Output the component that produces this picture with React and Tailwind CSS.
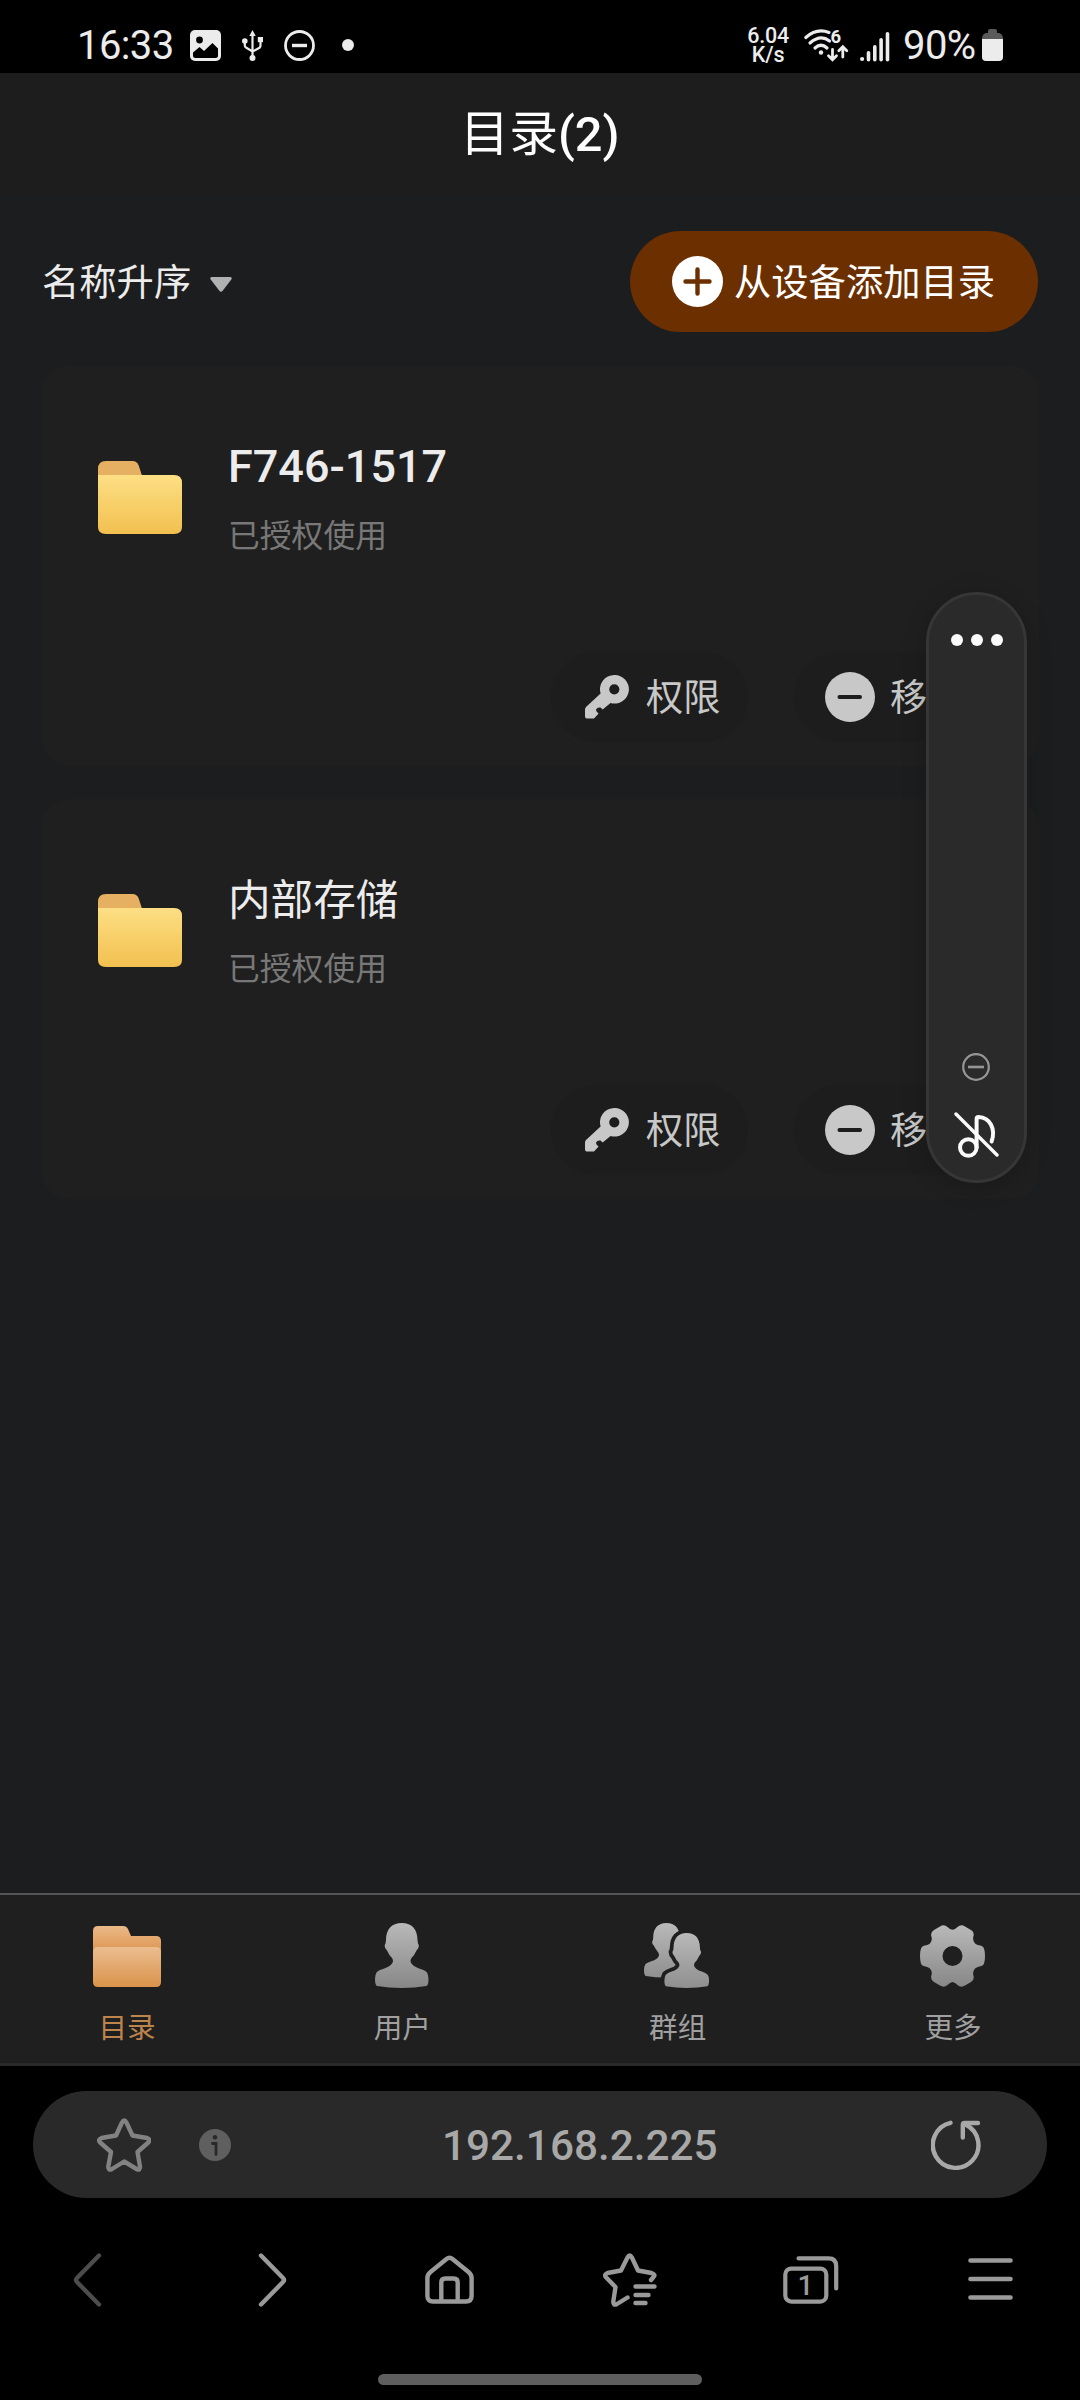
import React from 'react';

const directories = [
  { name: 'F746-1517', status: '已授权使用', latin: true },
  { name: '内部存储', status: '已授权使用', latin: false },
];

function StatusBar() {
  return (
    <div className="flex h-[73px] w-full shrink-0 items-start bg-black pl-[77px] pr-[77px] text-[#ececec]">
      <span className="mt-[22px] w-[98px] text-[40px] leading-[47px] tracking-[-0.6px]">16:33</span>

      {/* Picture */}
      <svg className="ml-[15px] mt-[30px]" width="31" height="31" viewBox="0 0 31 31">
        <rect width="31" height="31" rx="5" fill="#ececec" />
        <circle cx="9.5" cy="10" r="3.4" fill="#000" />
        <path d="M3 22.5L9.5 17L14 21L22.5 13L28 18.5V25.5Q28 28 25.5 28H5.5Q3 28 3 25.5Z" fill="#000" />
      </svg>

      {/* USB */}
      <svg className="ml-[21px] mt-[30px]" width="21" height="31" viewBox="0 0 21 31" fill="#ececec">
        <path d="M10.5 4V28M2.8 11V15.5Q2.8 17 4 17.5L10.5 21.5L17.5 17.8Q18.5 17 18.5 15.5V10" fill="none" stroke="#ececec" strokeWidth="2.2" />
        <path d="M10.5 0L13.7 6H7.3Z" />
        <circle cx="2.8" cy="11" r="2.8" />
        <rect x="15.8" y="7" width="5.2" height="5.2" />
        <circle cx="10.5" cy="28" r="3" />
      </svg>

      {/* Do not disturb */}
      <svg className="ml-[21px] mt-[30px]" width="31" height="31" viewBox="0 0 31 31" fill="none" stroke="#ececec">
        <circle cx="15.5" cy="15.5" r="14" strokeWidth="2.8" />
        <path d="M8 15.5H23" strokeWidth="3.4" />
      </svg>

      <span className="ml-[27px] mt-[39px] size-[12px] rounded-full bg-[#ececec]" />

      <div className="ml-auto mt-[26px] flex flex-col items-center text-[21.5px] font-medium leading-[19px] tracking-[-0.2px]">
        <span>6.04</span>
        <span>K/s</span>
      </div>

      {/* Wi-Fi 6 */}
      <svg className="ml-[15px] mt-[29px] overflow-visible" width="45" height="33" viewBox="0 0 45 33" fill="none" stroke="#ececec" strokeWidth="3.2" strokeLinecap="round">
        <path d="M1.8 8.5Q12.5 -1.2 25 3.4" />
        <path d="M6 14Q16.5 5 25.5 12" />
        <path d="M11 19Q17 13.5 23 19" />
        <circle cx="17" cy="23.5" r="2.2" fill="#ececec" stroke="none" />
        <path d="M28.5 20.5V30M24.5 26.8L28.5 30.8L32.5 26.8M38.8 28V19M34.8 21.8L38.8 17.8L42.8 21.8" strokeWidth="2.8" />
        <text x="26.4" y="13.8" fill="#ececec" stroke="none" className="text-[18.5px] font-bold">6</text>
      </svg>

      {/* Signal */}
      <svg className="ml-[11px] mt-[32px]" width="30" height="30" viewBox="0 0 30 30" fill="#ececec">
        <circle cx="2.1" cy="27" r="2.1" />
        <rect x="6.7" y="19" width="3.6" height="10.5" rx="1.8" />
        <rect x="13" y="13" width="3.6" height="16.5" rx="1.8" />
        <rect x="19.3" y="6" width="3.6" height="23.5" rx="1.8" />
        <rect x="25.7" y="0" width="3.6" height="29.5" rx="1.8" />
      </svg>

      <span className="ml-[13px] mt-[22px] w-[73px] whitespace-nowrap text-[40px] leading-[47px] tracking-[-0.6px]">90%</span>

      {/* Battery */}
      <svg className="ml-[6px] mt-[29px]" width="21" height="32" viewBox="0 0 21 32">
        <path d="M6 2Q6 0 8 0H13Q15 0 15 2V4H17Q21 5 21 10H0Q0 5 4 4H6Z" fill="#5a5a5a" />
        <path d="M0 10H21V28Q21 32 17 32H4Q0 32 0 28Z" fill="#ececec" />
      </svg>
    </div>
  );
}

function FolderIcon() {
  return (
    <svg width="84" height="73" viewBox="0 0 85 73" preserveAspectRatio="none" className="shrink-0">
      <defs>
        <linearGradient id="folderBody" x1="0" y1="0" x2="0" y2="1">
          <stop offset="0" stopColor="#fddf84" />
          <stop offset="1" stopColor="#f2c04f" />
        </linearGradient>
      </defs>
      <path d="M0 20V8Q0 0 8 0H35Q39 0 41 4L45 16V20Z" fill="#e5b061" />
      <path d="M0 14H77Q85 14 85 22V66Q85 73 77 73H8Q0 73 0 66Z" fill="url(#folderBody)" />
    </svg>
  );
}

function KeyIcon() {
  return (
    <svg width="44" height="44" viewBox="0 0 44 44" fill="#c8c8c8" className="shrink-0">
      <path
        fillRule="evenodd"
        d="M29.3 0A14.3 14.3 0 1 1 25.5 28L17.7 34.5L15.5 32.6Q12.5 32 11.2 34.2Q10.5 36 13.6 38.6L9.5 43Q9 43.6 8 43.6H2.5Q0 43.6 0 41V34.5Q0 33 1 32L15.6 18.5A14.3 14.3 0 0 1 29.3 0ZM29.3 9.2A5.1 5.1 0 1 0 29.3 19.4A5.1 5.1 0 1 0 29.3 9.2Z"
      />
    </svg>
  );
}

function DirectoryCard({ item }) {
  return (
    <div className="flex h-[400px] flex-col rounded-[28px] bg-[#1f1f1f] pl-[57px] pr-[48px]">
      <div className="mt-[73px] flex h-[121px]">
        <div className="mt-[22px]">
          <FolderIcon />
        </div>
        <div className="ml-[46px] flex flex-col">
          {item.latin ? (
            <span className="mt-[2px] text-[45px] font-medium leading-[52px] text-[#ececec]">{item.name}</span>
          ) : (
            <span className="mt-[2px] text-[42.6px] leading-[52px] text-[#ececec]">{item.name}</span>
          )}
          <span className="mt-[25px] text-[31.8px] leading-[36px] text-[#787878]">{item.status}</span>
        </div>
      </div>
      <div className="mt-[92px] flex h-[90px] justify-end gap-[46px]">
        <button className="flex w-[197px] items-center rounded-full bg-[#1d1d1d] pl-[34px] text-[37.2px] leading-[44px] text-[#c8c8c8]">
          <KeyIcon />
          <span className="ml-[17px] mt-[2px] whitespace-nowrap">权限</span>
        </button>
        <button className="flex w-[197px] items-center rounded-full bg-[#1d1d1d] pl-[31px] text-[37.2px] leading-[44px] text-[#c8c8c8]">
          <svg width="50" height="50" viewBox="0 0 50 50" className="shrink-0">
            <circle cx="25" cy="25" r="25" fill="#c8c8c8" />
            <path d="M14.5 25H35" stroke="#1d1d1d" strokeWidth="4" strokeLinecap="round" />
          </svg>
          <span className="ml-[15px] mt-[2px] whitespace-nowrap">移除</span>
        </button>
      </div>
    </div>
  );
}

function VolumePanel() {
  return (
    <div className="absolute left-[926px] top-[592px] flex h-[591px] w-[101px] flex-col items-center rounded-full border-[3px] border-[#363636] bg-[#2a2a2a] shadow-[0_4px_24px_rgba(0,0,0,0.2)]">
      <div className="mt-[39px] flex gap-[8px]">
        <span className="size-[12px] rounded-full bg-[#fafafa]" />
        <span className="size-[12px] rounded-full bg-[#fafafa]" />
        <span className="size-[12px] rounded-full bg-[#fafafa]" />
      </div>
      <svg className="mr-px mt-auto" width="28" height="28" viewBox="0 0 28 28" fill="none" stroke="#969696">
        <circle cx="14" cy="14" r="12.8" strokeWidth="2.2" />
        <path d="M6 14H22" strokeWidth="2.6" />
      </svg>
      <svg className="mb-[22px] mt-[31px]" width="45" height="46" viewBox="0 0 45 46" fill="none" stroke="#fafafa" strokeWidth="4" strokeLinecap="round">
        <circle cx="14.3" cy="35.5" r="8.3" />
        <path d="M22.6 35.5V7Q22.6 5 24.6 5C36 5.5 42 17 37.6 29.5" />
        <path d="M2 2L43 43" strokeWidth="3.4" />
      </svg>
    </div>
  );
}

const person =
  'M26.75 0C37 0 42.5 6.5 42.5 17Q42.5 20 43.9 22.5Q44 25 41.5 27.5Q39.5 32 36.5 35Q34.5 38 36.5 40.5C40 46 48 45 52 49.5Q53.5 52 53.5 56Q53.5 62 51.5 63Q40 65 26.75 65Q13.5 65 2 63Q0 62 0 56Q0 52 1.5 49.5C5.5 45 13.5 46 17 40.5Q19 38 17 35Q14 32 12 27.5Q9.5 25 9.6 22.5Q11 20 11 17C11 6.5 16.5 0 26.75 0Z';

function TabGradient({ id, height }) {
  return (
    <defs>
      <linearGradient id={id} gradientUnits="userSpaceOnUse" x1="0" y1="0" x2="0" y2={height}>
        <stop offset="0" stopColor="#b9b9b9" />
        <stop offset="1" stopColor="#878787" />
      </linearGradient>
    </defs>
  );
}

function DirectoryTabIcon() {
  return (
    <svg className="mt-px" width="68" height="61" viewBox="0 0 68 61">
      <defs>
        <linearGradient id="tabBack" gradientUnits="userSpaceOnUse" x1="0" y1="0" x2="0" y2="26">
          <stop offset="0" stopColor="#ebb988" />
          <stop offset="1" stopColor="#dc9550" />
        </linearGradient>
        <linearGradient id="tabFront" x1="0" y1="0" x2="0" y2="1">
          <stop offset="0" stopColor="#ebbd90" />
          <stop offset="1" stopColor="#da934a" />
        </linearGradient>
      </defs>
      <path d="M0 5Q0 0 5 0H30Q33.5 0 35 3L38 10H63Q68 10 68 15V30H0Z" fill="url(#tabBack)" />
      <path d="M0 26Q0 21 5 21H63Q68 21 68 26V56Q68 61 63 61H5Q0 61 0 56Z" fill="url(#tabFront)" />
    </svg>
  );
}

function UserTabIcon() {
  return (
    <svg className="mr-px" width="54" height="65" viewBox="0 0 54 65">
      <TabGradient id="userFill" height="65" />
      <path d={person} fill="url(#userFill)" />
    </svg>
  );
}

function GroupTabIcon() {
  return (
    <svg className="mr-[2px]" width="65" height="65" viewBox="0 0 65 65">
      <TabGradient id="groupFill" height="78" />
      <path d={person} transform="scale(0.84)" fill="url(#groupFill)" />
      <path d={person} transform="translate(20.4 10) scale(0.835 0.846)" fill="#1f1f1f" stroke="#1f1f1f" strokeWidth="9" />
      <path d={person} transform="translate(20.4 10) scale(0.835 0.846)" fill="url(#groupFill)" />
    </svg>
  );
}

function MoreTabIcon() {
  return (
    <svg width="65" height="62" viewBox="0 0 65 62">
      <TabGradient id="moreFill" height="62" />
      <path
        fillRule="evenodd"
        fill="url(#moreFill)"
        d="M32.5 4.7Q35 4.5 37.5 2Q41 -1 45 1.5L51 5Q54.5 7 53.5 11Q52.5 14 54 17Q55 19.5 58.5 20.3Q63 20.7 64 23.5Q65 26.5 65 31Q65 36 64 38.8Q63 41.2 58.5 41.7Q55 42.5 54 45Q52.5 48 53.5 51Q54.5 55 51 57L45 60.5Q41 63 37.5 60Q35 57.3 32.5 57Q30 57.3 27.5 60Q24 63 20 60.5L14 57Q10.5 55 11.2 51Q12.5 48 11 45Q10 42.5 6.5 41.7Q2 41.2 1 38.8Q0 36 0 31Q0 26.5 1 23.5Q2 20.7 6.5 20.3Q10 19.5 11 17Q12.5 14 11.2 11Q10.5 7 14 5L20 1.5Q24 -1 27.5 2Q30 4.5 32.5 4.7ZM32.5 21A10 10 0 1 0 32.5 41A10 10 0 1 0 32.5 21Z"
      />
    </svg>
  );
}

const tabs = [
  { label: '目录', Icon: DirectoryTabIcon, active: true },
  { label: '用户', Icon: UserTabIcon },
  { label: '群组', Icon: GroupTabIcon },
  { label: '更多', Icon: MoreTabIcon },
];

function TabBar() {
  return (
    <div className="flex h-[173px] w-full shrink-0 justify-between border-b-[3px] border-t-2 border-b-[#2a2a2a] border-t-[#555555] bg-[#1f1f1f] px-[86px]">
      {tabs.map(({ label, Icon, active }) => (
        <div key={label} className="flex w-[82px] flex-col items-center">
          <div className="mt-[28px] flex h-[65px] items-center">
            <Icon />
          </div>
          <span className={`mt-[23px] text-[28.6px] leading-[34px] ${active ? 'text-[#bd844b]' : 'text-[#a0a0a0]'}`}>{label}</span>
        </div>
      ))}
    </div>
  );
}

function NavButton({ children }) {
  return <button className="flex w-[60px] items-center justify-center">{children}</button>;
}

function BrowserBar() {
  return (
    <div className="flex w-full flex-1 flex-col bg-black">
      <div className="mx-[33px] mt-[25px] flex h-[107px] items-center rounded-full bg-[#292929] pl-[64px] pr-[66px]">
        <svg width="54" height="54" viewBox="0 0 54 54" fill="none" stroke="#828282" strokeWidth="4.4" strokeLinejoin="round">
          <path d="M25 4.5Q27.2 0.5 29.4 4.5L35.5 17.5L50 20Q54 21.5 51.3 24.5L40.5 34L43 48.5Q43.3 53 39.5 51L27.2 43.5L15 51Q11 53 11.3 48.5L14 34L3.2 24.5Q.5 21.5 4.5 20L19 17.5Z" />
        </svg>
        <svg className="ml-[48px]" width="32" height="32" viewBox="0 0 32 32">
          <circle cx="16" cy="16" r="16" fill="#5f5f5f" />
          <circle cx="16" cy="8.3" r="2.3" fill="#292929" />
          <path d="M13.5 14.5H17V25.5" fill="none" stroke="#292929" strokeWidth="2.8" strokeLinecap="round" />
        </svg>
        <span className="mt-[3px] flex-1 pl-[211px] text-[42.3px] font-medium leading-[50px] text-[#a8a8a8]">192.168.2.225</span>
        <svg width="50" height="50" viewBox="0 0 50 50" fill="none" stroke="#a8a8a8" strokeWidth="4.4" strokeLinecap="round" strokeLinejoin="round">
          <path d="M19.5 2.8A22.8 22.8 0 1 0 35 4.7" />
          <path d="M31.8 17.5V5Q31.8 3 33.8 3H47" />
        </svg>
      </div>

      <div className="mt-[54px] flex h-[56px] items-center justify-between pl-[57px] pr-[59px]">
        <NavButton>
          <svg width="29" height="54" viewBox="0 0 29 54" fill="none" stroke="#4c4c4c" strokeWidth="4.4" strokeLinecap="round">
            <path d="M26 2.5L4 25Q2 27 4 29L26 51.5" />
          </svg>
        </NavButton>
        <NavButton>
          <svg className="ml-[10px]" width="29" height="54" viewBox="0 0 29 54" fill="none" stroke="#9a9a9a" strokeWidth="4.4" strokeLinecap="round">
            <path d="M3 2.5L25 25Q27 27 25 29L3 51.5" />
          </svg>
        </NavButton>
        <NavButton>
          <svg className="ml-[2px]" width="49" height="50" viewBox="0 0 49 50" fill="none" stroke="#9a9a9a" strokeWidth="4.4">
            <path d="M21.5 4Q24.5 1.5 27.5 4L43.5 17Q46.6 19.5 46.6 23V41Q46.6 46.5 41 46.5H8Q2.4 46.5 2.4 41V23Q2.4 19.5 5.5 17Z" />
            <path d="M16.3 46V27.5Q16.3 23.5 20.3 23.5H28.7Q32.7 23.5 32.7 27.5V46" />
          </svg>
        </NavButton>
        <NavButton>
          <svg className="ml-[2px]" width="54" height="54" viewBox="0 0 54 54" fill="none" stroke="#9a9a9a" strokeWidth="4.4" strokeLinecap="round" strokeLinejoin="round">
            <path d="M24.5 44.5L14 51Q10 53 10.3 48.5L12.5 34L3.2 24.5Q.5 21.5 4.5 20L18 17.5L24.5 4.5Q26.7 .5 28.9 4.5L35 17.5L48.5 20Q53 21.5 50.5 24L48 27" />
            <path d="M32.5 33.5H51.5M32.5 42H45.5M32.5 50H42.5" />
          </svg>
        </NavButton>
        <NavButton>
          <svg className="ml-[2px]" width="56" height="49" viewBox="0 0 56 49" fill="none" stroke="#9a9a9a" strokeWidth="4.2" strokeLinecap="round">
            <rect x="2.3" y="12.6" width="41" height="33" rx="6" />
            <path d="M15.5 2.3H45.5Q53.2 2.3 53.2 10V32.5" />
            <text x="22.5" y="39" textAnchor="middle" fill="#9a9a9a" stroke="none" className="text-[28px] font-medium">1</text>
          </svg>
        </NavButton>
        <NavButton>
          <svg width="45" height="50" viewBox="0 0 45 50" stroke="#9a9a9a" strokeWidth="4.6" strokeLinecap="round">
            <path d="M2.5 5.5H42.5M2.5 24H42.5M2.5 42.5H42.5" />
          </svg>
        </NavButton>
      </div>

      <div className="mx-auto mt-[66px] h-[11px] w-[324px] rounded-full bg-[#5e5e5e]" />
    </div>
  );
}

function App() {
  return (
    <div className="relative flex h-[2400px] w-[1080px] flex-col overflow-hidden bg-[#1c1d1f] font-[Roboto,'Noto_Sans_CJK_SC',sans-serif]">
      <StatusBar />

      <div className="flex h-[124px] shrink-0 items-center justify-center bg-[#1d1d1e]">
        <h1 className="text-[48.8px] font-medium leading-[60px] text-white">
          <span className="font-normal">目录</span>(2)
        </h1>
      </div>

      <div className="mt-[34px] flex h-[101px] shrink-0 items-center justify-between pl-[42px] pr-[42px]">
        <div className="flex items-center text-[37.3px] leading-[44px] text-[#ececec]">
          <span className="mt-[2px]">名称升序</span>
          <svg className="ml-[19px] mt-[6px]" width="22" height="16" viewBox="0 0 22 16">
            <path d="M1.5 0H20.5Q22.5 .5 21.3 2.5L12.5 14Q11 15.6 9.5 14L.7 2.5Q-.5 .5 1.5 0Z" fill="#b0b2b2" />
          </svg>
        </div>
        <button className="flex h-[101px] w-[408px] items-center rounded-full bg-[#6b2f00] pl-[42px] text-[37.3px] leading-[44px] text-white">
          <svg width="51" height="51" viewBox="0 0 51 51" className="shrink-0">
            <circle cx="25.5" cy="25.5" r="25.5" fill="#fff" />
            <path d="M25.5 13.5V37.5M13.5 25.5H37.5" stroke="#6b2f00" strokeWidth="4.4" strokeLinecap="round" />
          </svg>
          <span className="ml-[11px] mt-[2px] whitespace-nowrap">从设备添加目录</span>
        </button>
      </div>

      <div className="mt-[34px] flex flex-1 flex-col gap-[33px] px-[41px]">
        {directories.map((item) => (
          <DirectoryCard key={item.name} item={item} />
        ))}
      </div>

      <TabBar />
      <div className="flex h-[334px] shrink-0">
        <BrowserBar />
      </div>

      <VolumePanel />
    </div>
  );
}

export default App;
